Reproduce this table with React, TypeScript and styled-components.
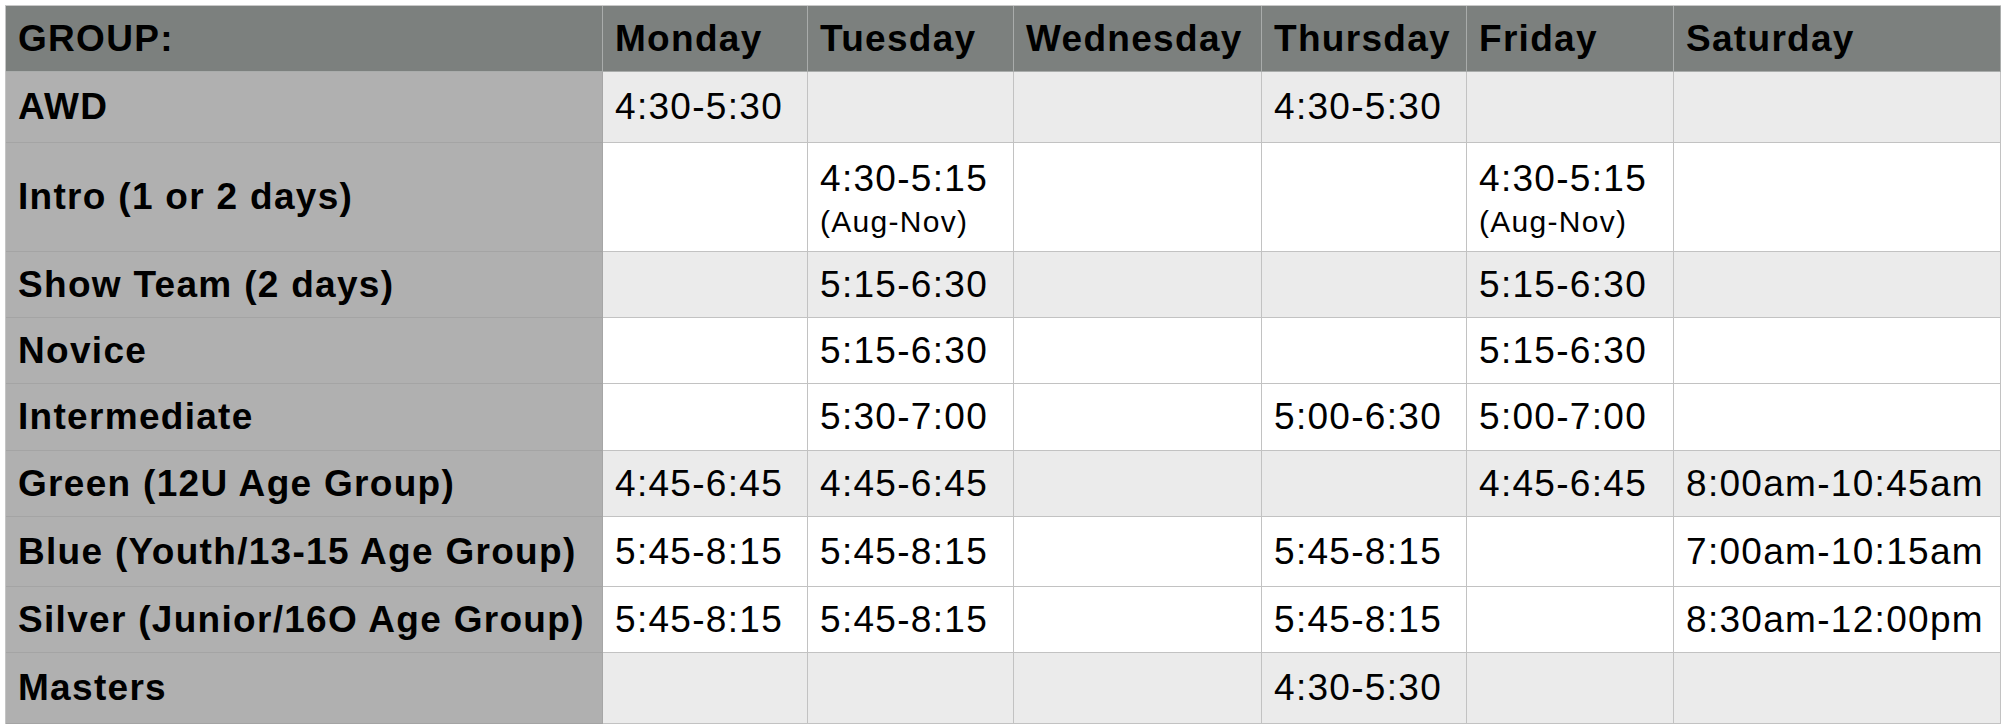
import styled, { createGlobalStyle } from "styled-components";

const GlobalStyle = createGlobalStyle`
  body {
    margin: 0;
    background: #fff;
    color: #000;
    font-family: "Liberation Sans", Arial, Helvetica, sans-serif;
  }
`;

const Page = styled.div`
  padding: 5px 0 0 5px;
`;

const Schedule = styled.div`
  display: grid;
  grid-template-columns: 597px 205px 206px 248px 205px 207px 327px;
  grid-template-rows: 66px 71px 109px 66px 66px 67px 66px 70px 66px 71px;
  width: max-content;
  border-top: 1px solid #c9c9c9;
  border-left: 1px solid #c4c4c4;
`;

const Cell = styled.div`
  display: flex;
  align-items: center;
  padding: 0 12px;
  border-right: 1px solid #c2c2c2;
  border-bottom: 1px solid #c2c2c2;
  font-size: 37px;
  letter-spacing: 1.3px;
  white-space: nowrap;
  overflow: hidden;
`;

const HeadCell = styled(Cell)`
  background: #7c807e;
  font-weight: 700;
  border-right-color: #a9acab;
  border-bottom-color: #a9acab;
`;

const GroupCell = styled(Cell)`
  background: #b0b0b0;
  font-weight: 700;
  border-right-color: #a6a6a6;
  border-bottom-color: #a4a4a4;
`;

const TimeCell = styled(Cell)<{ $shaded: boolean }>`
  background: ${(props) => (props.$shaded ? "#ebebeb" : "#fff")};
`;

const Stack = styled.div`
  display: flex;
  flex-direction: column;
  padding-top: 10px;
`;

const Time = styled.span`
  line-height: 40px;
`;

const Note = styled.span`
  font-size: 30px;
  line-height: 46px;
  letter-spacing: 1.3px;
`;

type Slot = string | { time: string; note: string } | null;

interface IRow {
  group: string;
  shaded: boolean;
  slots: Slot[];
}

const days = ["Monday", "Tuesday", "Wednesday", "Thursday", "Friday", "Saturday"];

const intro = { time: "4:30-5:15", note: "(Aug-Nov)" };

const rows: IRow[] = [
  { group: "AWD", shaded: true, slots: ["4:30-5:30", null, null, "4:30-5:30", null, null] },
  { group: "Intro (1 or 2 days)", shaded: false, slots: [null, intro, null, null, intro, null] },
  { group: "Show Team (2 days)", shaded: true, slots: [null, "5:15-6:30", null, null, "5:15-6:30", null] },
  { group: "Novice", shaded: false, slots: [null, "5:15-6:30", null, null, "5:15-6:30", null] },
  { group: "Intermediate", shaded: false, slots: [null, "5:30-7:00", null, "5:00-6:30", "5:00-7:00", null] },
  {
    group: "Green (12U Age Group)",
    shaded: true,
    slots: ["4:45-6:45", "4:45-6:45", null, null, "4:45-6:45", "8:00am-10:45am"],
  },
  {
    group: "Blue (Youth/13-15 Age Group)",
    shaded: false,
    slots: ["5:45-8:15", "5:45-8:15", null, "5:45-8:15", null, "7:00am-10:15am"],
  },
  {
    group: "Silver (Junior/16O Age Group)",
    shaded: false,
    slots: ["5:45-8:15", "5:45-8:15", null, "5:45-8:15", null, "8:30am-12:00pm"],
  },
  { group: "Masters", shaded: true, slots: [null, null, null, "4:30-5:30", null, null] },
];

function renderSlot(slot: Slot) {
  if (!slot) return null;
  if (typeof slot === "string") return slot;
  return (
    <Stack>
      <Time>{slot.time}</Time>
      <Note>{slot.note}</Note>
    </Stack>
  );
}

function App() {
  return (
    <>
      <GlobalStyle />
      <Page>
        <Schedule>
          <HeadCell>GROUP:</HeadCell>
          {days.map((day) => (
            <HeadCell key={day}>{day}</HeadCell>
          ))}
          {rows.map((row) => (
            <>
              <GroupCell key={row.group}>{row.group}</GroupCell>
              {row.slots.map((slot, i) => (
                <TimeCell key={`${row.group}-${i}`} $shaded={row.shaded}>
                  {renderSlot(slot)}
                </TimeCell>
              ))}
            </>
          ))}
        </Schedule>
      </Page>
    </>
  );
}

export default App;
